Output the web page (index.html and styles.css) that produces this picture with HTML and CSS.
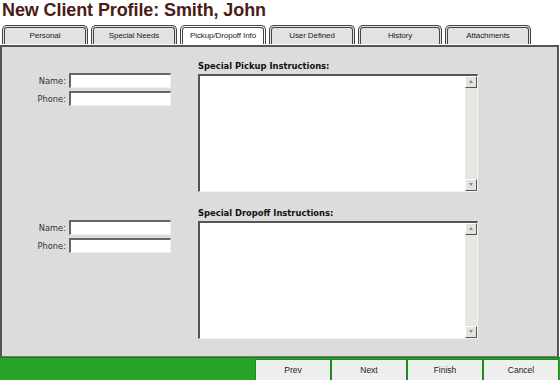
FILE: index.html
```html
<!DOCTYPE html>
<html lang="en">
<head>
  <meta charset="UTF-8" />
  <title>New Client Profile</title>
  <link rel="stylesheet" href="styles.css">
</head>
<body>

  <!-- Header -->
  <h1 class="page-title">New Client Profile: Smith, John</h1>

  <!-- Tabs -->
  <nav class="tabs">
    <div class="tab">Personal</div>
    <div class="tab">Special Needs</div>
    <div class="tab active">Pickup/Dropoff Info</div>
    <div class="tab">User Defined</div>
    <div class="tab">History</div>
    <div class="tab">Attachments</div>
  </nav>

  <!-- Panel -->
  <main class="panel">
    <section class="block">
      <div class="fields">
        <div class="field"><label>Name:</label><input type="text"></div>
        <div class="field"><label>Phone:</label><input type="text"></div>
      </div>
      <div class="notes">
        <h4>Special Pickup Instructions:</h4>
        <div class="memo">
          <textarea></textarea>
          <div class="scroll">
            <span class="arrow up"></span>
            <span class="track"></span>
            <span class="arrow down"></span>
          </div>
        </div>
      </div>
    </section>

    <section class="block second">
      <div class="fields">
        <div class="field"><label>Name:</label><input type="text"></div>
        <div class="field"><label>Phone:</label><input type="text"></div>
      </div>
      <div class="notes">
        <h4>Special Dropoff Instructions:</h4>
        <div class="memo">
          <textarea></textarea>
          <div class="scroll">
            <span class="arrow up"></span>
            <span class="track"></span>
            <span class="arrow down"></span>
          </div>
        </div>
      </div>
    </section>
  </main>

  <!-- Footer buttons -->
  <footer class="actions">
    <button>Prev</button>
    <button>Next</button>
    <button>Finish</button>
    <button>Cancel</button>
  </footer>

</body>
</html>
```

FILE: styles.css
```css
* {
  margin: 0;
  padding: 0;
  box-sizing: border-box;
}

body {
  width: 560px;
  height: 380px;
  overflow: hidden;
  background: #fff;
  font-family: 'DejaVu Sans', Verdana, sans-serif;
}

/* Header */
.page-title {
  height: 25px;
  padding: 0 0 0 2px;
  font-family: 'Liberation Sans', Arial, sans-serif;
  font-size: 18px;
  font-weight: bold;
  color: #4b1c17;
  line-height: 20px;
  letter-spacing: -0.1px;
}

/* Tabs */
.tabs {
  display: flex;
  gap: 3px;
  padding-left: 2px;
  height: 20px;
}

.tab {
  width: 86px;
  height: 19px;
  border: 3px double #444;
  border-bottom: none;
  border-radius: 5px 5px 0 0;
  background: #e2e2e2;
  font-family: 'Liberation Sans', Arial, sans-serif;
  font-size: 8px;
  color: #1a1a1a;
  text-align: center;
  line-height: 15px;
  letter-spacing: -0.1px;
}

.tab.active {
  background: #fff;
}

.tab:nth-child(5) {
  width: 84px;
}

/* Panel */
.panel {
  height: 312px;
  background: #dcdcdc;
  border: 2px solid #555;
  border-bottom: 1px solid #777;
  margin-right: 1px;
  padding-top: 14px;
}

.block {
  display: flex;
}

.block.second {
  margin-top: 16px;
}

.fields {
  width: 196px;
  padding-top: 12px;
  display: flex;
  flex-direction: column;
  gap: 3px;
}

.field {
  display: flex;
  align-items: center;
  gap: 3px;
}

.field label {
  width: 64px;
  text-align: right;
  font-size: 8.3px;
  color: #333;
}

.field input {
  width: 102px;
  height: 15px;
  border: 1px solid #eee;
  border-top: 2px solid #666;
  border-left: 2px solid #666;
  background: #fff;
  outline: none;
}

.notes h4 {
  font-size: 8.4px;
  font-weight: bold;
  color: #111;
  height: 13px;
  line-height: 11px;
}

/* Memo box with drawn scrollbar */
.memo {
  display: flex;
  width: 280px;
  height: 118px;
  border: 1px solid #f4f4f4;
  border-top: 2px solid #555;
  border-left: 2px solid #555;
  background: #fff;
}

.memo textarea {
  flex: 1;
  border: none;
  resize: none;
  outline: none;
  overflow: hidden;
}

.scroll {
  width: 12px;
  display: flex;
  flex-direction: column;
  background: #e8e6e2;
}

.scroll .track {
  flex: 1;
}

.arrow {
  height: 12px;
  background: #e4e2de;
  border: 1px solid #fff;
  border-right-color: #555;
  border-bottom-color: #555;
  position: relative;
}

.arrow::after {
  content: '';
  position: absolute;
  left: 3px;
  top: 3px;
  border-left: 2px solid transparent;
  border-right: 2px solid transparent;
}

.arrow.up::after {
  border-bottom: 3px solid #888;
}

.arrow.down::after {
  border-top: 3px solid #888;
}

/* Footer */
.actions {
  height: 24px;
  background: #28a428;
  border-top: 1px solid #1d7d1d;
  display: flex;
  justify-content: flex-end;
  padding: 1px 1px 0 0;
}

.actions button {
  width: 76px;
  height: 22px;
  background: #eeeeee;
  border: 1px solid #1f8a1f;
  font-family: 'Liberation Sans', Arial, sans-serif;
  font-size: 8.5px;
  color: #222;
}
```
